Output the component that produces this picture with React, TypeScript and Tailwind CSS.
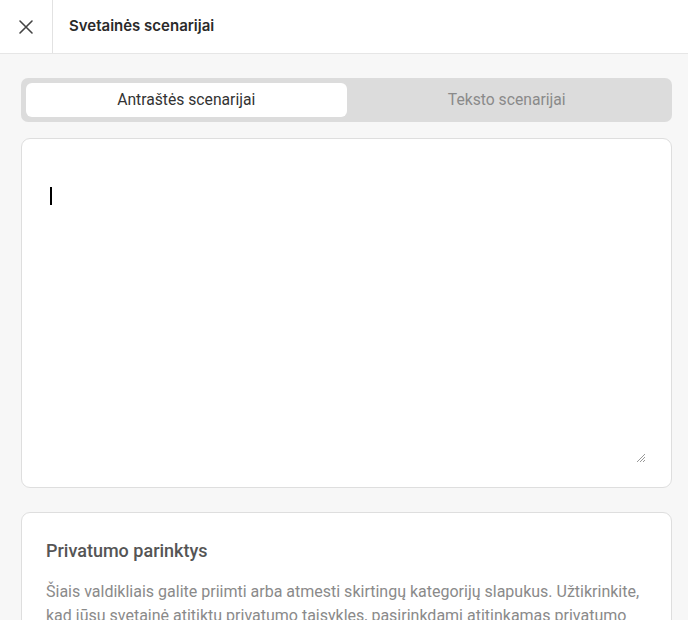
import React from "react";

export default function App() {
  return (
    <div className="w-[688px] h-[620px] overflow-hidden bg-[#f7f7f7]" style={{ fontFamily: "Roboto, 'Noto Sans', sans-serif" }}>
      <div className="h-[54px] flex bg-white border-b border-[#e6e6e6]">
        <button className="w-[53px] h-full flex items-center justify-center border-r border-[#e2e2e2]">
          <svg width="16" height="16" viewBox="0 0 16 16" fill="none" stroke="#444" strokeWidth="1.6" strokeLinecap="round">
            <path d="M2 2 L14 14 M14 2 L2 14" />
          </svg>
        </button>
        <div className="flex items-center pl-[16px] text-[15px] font-semibold text-[#2a2a2a]" style={{ fontFamily: "Inter, 'Noto Sans', sans-serif" }}>
          Svetainės scenarijai
        </div>
      </div>
      <div className="pl-[21px] pr-[16px] pt-[24px] flex flex-col">
        <div className="h-[44px] rounded-[7px] bg-[#dcdcdc] p-[5px] flex">
          <div className="flex-1 rounded-[6px] bg-white flex items-center justify-center text-[15.7px] text-[#333]">
            Antraštės scenarijai
          </div>
          <div className="flex-1 flex items-center justify-center text-[15.7px] text-[#8a8a8a]">
            Teksto scenarijai
          </div>
        </div>
        <div className="mt-[16px] h-[350px] rounded-[9px] bg-white border border-[#dedede] relative">
          <div className="absolute left-[28px] top-[48px] w-[1.5px] h-[18px] bg-black" />
          <svg className="absolute right-[25px] bottom-[24px]" width="10" height="10" viewBox="0 0 10 10" stroke="#999" strokeWidth="1">
            <path d="M9 1 L1 9 M9 4 L4 9 M9 7 L7 9" />
          </svg>
        </div>
        <div className="mt-[24px] rounded-[9px] bg-white border border-[#dedede] px-[24px] pt-[26px] pb-[24px]">
          <div className="text-[18px] font-medium text-[#555] leading-[24px]">Privatumo parinktys</div>
          <p className="mt-[17px] text-[16px] leading-[24px] text-[#8a8a8a]">
            Šiais valdikliais galite priimti arba atmesti skirtingų kategorijų slapukus. Užtikrinkite, kad jūsų svetainė atitiktų privatumo taisykles, pasirinkdami atitinkamas privatumo parinktis.
          </p>
        </div>
      </div>
    </div>
  );
}
